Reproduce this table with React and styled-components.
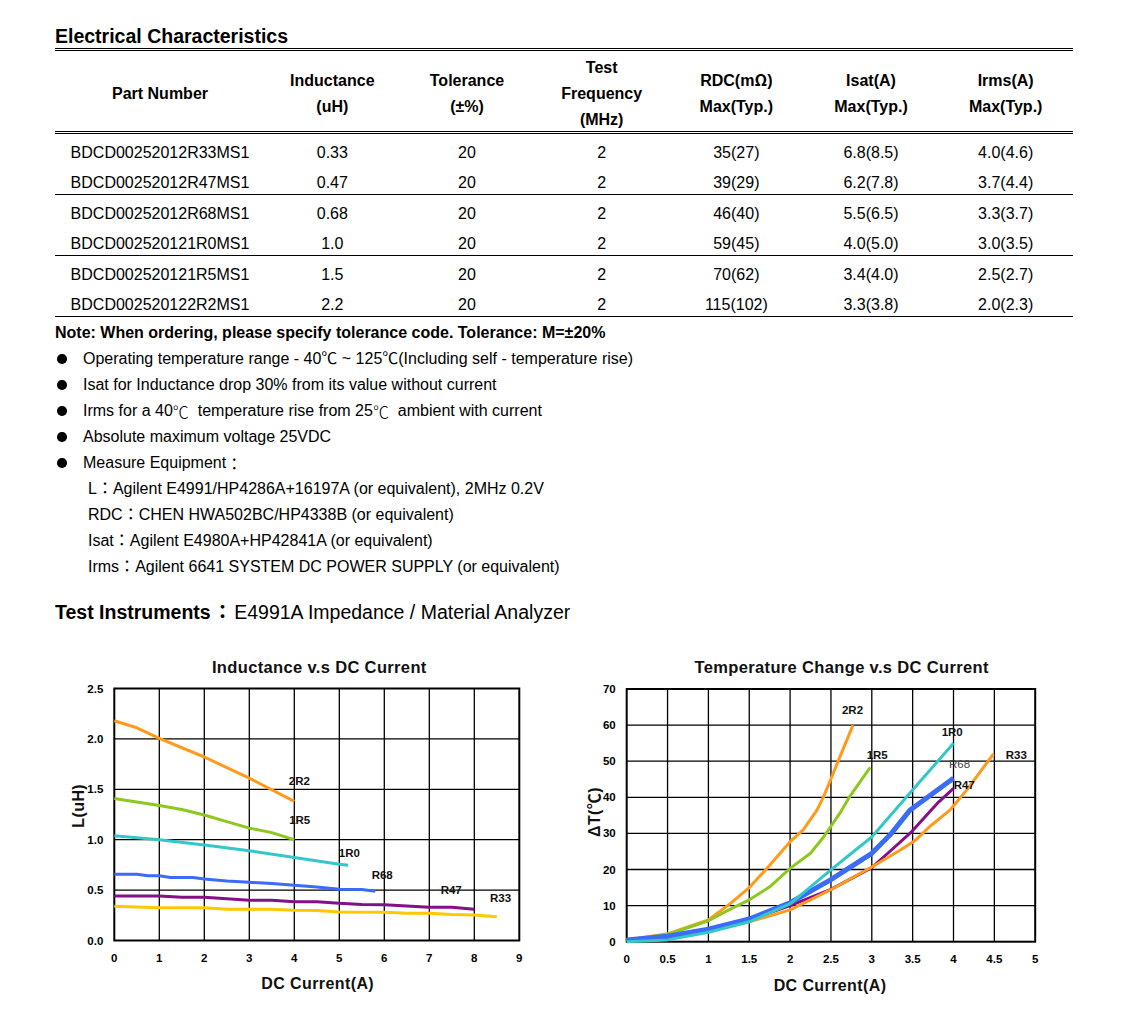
import React from 'react';
import styled, { createGlobalStyle } from 'styled-components';

const GlobalStyle = createGlobalStyle`
  html, body { margin: 0; padding: 0; background: #fff; }
  body {
    font-family: "Liberation Sans", Arial, "Noto Sans CJK TC", sans-serif;
    color: #000;
  }
`;

const Page = styled.div`
  width: 1018px;
  padding: 24px 0 0 55px;
`;

const Heading = styled.h2`
  margin: 0;
  font-size: 19.5px;
  font-weight: bold;
  line-height: 24px;
`;

const Table = styled.div`
  display: flex;
  flex-direction: column;
`;

const cols = `210px repeat(6, 1fr)`;

const HeaderRow = styled.div`
  display: grid;
  grid-template-columns: ${cols};
  height: 80px;
  border-top: 3px double #000;
  border-bottom: 3px double #000;
`;

const HeadCell = styled.div`
  display: flex;
  flex-direction: column;
  justify-content: center;
  align-items: center;
  padding-top: 4px;
  font-size: 16px;
  font-weight: bold;
  line-height: 26px;
  text-align: center;
`;

const Group = styled.div`
  border-bottom: 1px solid #000;
`;

const Row = styled.div`
  display: grid;
  grid-template-columns: ${cols};
  padding-top: 8px;
  font-size: 16px;
  line-height: 22px;
`;

const Cell = styled.div`
  text-align: center;
`;

const Cjk = styled.span`
  font-family: "Noto Sans CJK TC", sans-serif;
  font-weight: ${p => (p.$light ? 300 : 'inherit')};
  line-height: 0;
  margin-left: ${p => p.$pad || 0}px;
  margin-right: ${p => p.$pad || 0}px;
`;

const Notes = styled.div`
  margin-top: 3px;
  font-size: 16px;
  line-height: 26px;
`;

const NoteTitle = styled.div`
  font-weight: bold;
`;

const Bullet = styled.div`
  display: flex;
  align-items: center;
  height: 26px;
`;

const Marker = styled.span`
  flex: none;
  width: 28px;
  display: flex;
  align-items: center;
  &::after {
    content: '';
    width: 9.5px;
    height: 9.5px;
    margin-left: 2px;
    border-radius: 50%;
    background: #000;
  }
`;

const SubItem = styled.div`
  height: 26px;
  padding-left: 33px;
`;

const Section = styled.div`
  margin-top: 20px;
  height: 24px;
  font-size: 19.5px;
  line-height: 24px;
`;

const Strong = styled.span`
  font-weight: bold;
`;

const ChartRow = styled.div`
  display: flex;
  gap: 30px;
  margin-top: 26px;
  padding-left: 5px;
`;

const ChartSvg = styled.svg`
  display: block;
  flex: none;
  overflow: visible;
  font-family: "Liberation Sans", Arial, "Noto Sans CJK TC", sans-serif;
`;

const ChartTitle = styled.text`
  font-size: 16.5px;
  font-weight: bold;
  letter-spacing: 0.35px;
  fill: #111;
`;

const AxisTitle = styled.text`
  font-size: 16px;
  font-weight: bold;
  letter-spacing: 0.4px;
  fill: #111;
`;

const Tick = styled.text`
  font-size: 11.5px;
  font-weight: bold;
  fill: #000;
`;

const SeriesLabel = styled.text`
  font-size: 11.5px;
  font-weight: ${p => (p.$thin ? 'normal' : 'bold')};
  fill: ${p => (p.$thin ? '#444' : '#111')};
`;

const ORANGE = '#ff9a1a';
const GREEN = '#8cc81e';
const CYAN = '#33c7c9';
const BLUE = '#3a6cf5';
const PURPLE = '#840f88';
const YELLOW = '#ffc800';

const leftChart = {
  width: 480,
  height: 350,
  plot: { left: 54.3, right: 459.3, top: 38.5, bottom: 290.5 },
  xMax: 9,
  xStep: 1,
  yMax: 2.5,
  yStep: 0.5,
  xFmt: v => String(v),
  yFmt: v => v.toFixed(1),
  xTickY: 311.7,
  title: { text: 'Inductance v.s DC Current', x: 259.3, y: 23.3 },
  xTitle: { text: 'DC Current(A)', x: 257.7, y: 339 },
  yTitle: { text: 'L(uH)', x: 23.5, y: 155.8 },
  curves: [
    { color: ORANGE, w: 3, pts: [[0, 2.18], [0.5, 2.11], [1, 2.005], [2, 1.82], [3, 1.61], [4, 1.38]] },
    { color: GREEN, w: 3, pts: [[0, 1.41], [1, 1.34], [1.5, 1.3], [2, 1.245], [2.5, 1.18], [3, 1.115], [3.5, 1.07], [4, 1.0]] },
    { color: CYAN, w: 3, pts: [[0, 1.04], [1, 1.0], [2, 0.947], [3, 0.89], [4, 0.822], [5, 0.756], [5.2, 0.746]] },
    { color: BLUE, w: 3, pts: [[0, 0.657], [0.5, 0.657], [0.75, 0.642], [1, 0.642], [1.25, 0.625], [1.75, 0.625], [2, 0.61], [2.5, 0.59], [3, 0.577], [3.5, 0.566], [4, 0.548], [4.5, 0.532], [5, 0.508], [5.5, 0.505], [5.8, 0.488]] },
    { color: PURPLE, w: 3, pts: [[0, 0.44], [1, 0.44], [1.5, 0.43], [2, 0.43], [3, 0.40], [3.5, 0.40], [4, 0.385], [4.5, 0.385], [5, 0.37], [5.5, 0.358], [6, 0.355], [7, 0.33], [7.5, 0.33], [8, 0.31]] },
    { color: YELLOW, w: 3, pts: [[0, 0.34], [1, 0.325], [2, 0.325], [2.5, 0.31], [3, 0.31], [3.5, 0.31], [4, 0.30], [4.5, 0.298], [5, 0.283], [6, 0.28], [6.5, 0.27], [7, 0.27], [7.5, 0.258], [8, 0.252], [8.5, 0.236]] },
  ],
  labels: [
    { t: '2R2', x: 239.3, y: 135 },
    { t: '1R5', x: 239.7, y: 174 },
    { t: '1R0', x: 289.3, y: 206.7 },
    { t: 'R68', x: 322.2, y: 229 },
    { t: 'R47', x: 391.2, y: 244 },
    { t: 'R33', x: 440.5, y: 252.3 },
  ],
};

const rightChart = {
  width: 490,
  height: 350,
  plot: { left: 56.7, right: 465.2, top: 39, bottom: 291.7 },
  xMax: 5,
  xStep: 0.5,
  yMax: 70,
  yStep: 10,
  xFmt: v => String(v),
  yFmt: v => String(v),
  xTickY: 312.7,
  title: { text: 'Temperature Change v.s DC Current', x: 271.7, y: 22.7 },
  xTitle: { text: 'DC Current(A)', x: 260, y: 340.7 },
  yTitle: { text: 'ΔT(℃)', x: 30, y: 162 },
  curves: [
    { color: ORANGE, w: 3, pts: [[0, 0.5], [0.5, 2.2], [1, 6], [1.27, 10.6], [1.5, 15], [1.75, 21.2], [2, 27.7], [2.16, 31], [2.33, 36.5], [2.41, 40.2], [2.51, 45.7], [2.61, 51.2], [2.77, 60]] },
    { color: GREEN, w: 3, pts: [[0, 0.5], [0.5, 2], [1, 5.8], [1.25, 8.8], [1.5, 11.6], [1.75, 15.2], [2, 20.3], [2.25, 24.5], [2.41, 29], [2.61, 35.6], [2.73, 40.2], [2.98, 48.3]] },
    { color: PURPLE, w: 3, pts: [[0, 0.5], [0.5, 1.3], [1, 3], [1.5, 6], [2, 10], [2.5, 14.5], [3, 20.5], [3.24, 25.4], [3.49, 30.5], [3.8, 38.3], [4, 42.5]] },
    { color: ORANGE, w: 3, pts: [[0, 0.5], [0.5, 1.5], [1, 3], [1.5, 5.5], [2, 8.8], [2.5, 14.4], [3, 20.7], [3.35, 25.4], [3.53, 28], [3.71, 31.9], [3.96, 36.5], [4.16, 42], [4.49, 52]] },
    { color: BLUE, w: 5, pts: [[0, 0.5], [0.5, 1.5], [1, 3.5], [1.5, 6.3], [2, 10.8], [2.5, 17.2], [3, 24.5], [3.24, 30], [3.47, 36.5], [4, 45.3]] },
    { color: CYAN, w: 3, pts: [[0, 0], [0.5, 0.5], [1, 2.6], [1.5, 5.5], [2, 10.5], [2.5, 19.9], [2.8, 25.4], [3, 29], [3.18, 33.7], [3.5, 42], [4, 55]] },
  ],
  labels: [
    { t: '2R2', x: 282.5, y: 64.3 },
    { t: '1R0', x: 382.2, y: 86 },
    { t: '1R5', x: 307.2, y: 109.3 },
    { t: 'R33', x: 446.3, y: 109.3 },
    { t: 'R68', x: 389.5, y: 118.3, thin: true },
    { t: 'R47', x: 394.2, y: 139.3 },
  ],
};

function Chart({ spec }) {
  const { width, height, plot, xMax, xStep, yMax, yStep } = spec;
  const sx = v => plot.left + (v / xMax) * (plot.right - plot.left);
  const sy = v => plot.bottom - (v / yMax) * (plot.bottom - plot.top);
  const xs = [];
  for (let i = 0; i <= Math.round(xMax / xStep); i++) xs.push(+(i * xStep).toFixed(2));
  const ys = [];
  for (let i = 0; i <= Math.round(yMax / yStep); i++) ys.push(+(i * yStep).toFixed(2));

  return (
    <ChartSvg width={width} height={height} viewBox={`0 0 ${width} ${height}`}>
      <ChartTitle x={spec.title.x} y={spec.title.y} textAnchor="middle">{spec.title.text}</ChartTitle>
      {xs.slice(1, -1).map(v => (
        <line key={'gx' + v} x1={sx(v)} x2={sx(v)} y1={plot.top} y2={plot.bottom} stroke="#000" strokeWidth="1.3" />
      ))}
      {ys.slice(1, -1).map(v => (
        <line key={'gy' + v} x1={plot.left} x2={plot.right} y1={sy(v)} y2={sy(v)} stroke="#000" strokeWidth="1.3" />
      ))}
      <rect x={plot.left} y={plot.top} width={plot.right - plot.left} height={plot.bottom - plot.top} fill="none" stroke="#000" strokeWidth="2" />
      {spec.curves.map((c, i) => (
        <polyline
          key={'c' + i}
          points={c.pts.map(([a, b]) => `${sx(a).toFixed(1)},${sy(b).toFixed(1)}`).join(' ')}
          fill="none"
          stroke={c.color}
          strokeWidth={c.w}
          strokeLinejoin="round"
        />
      ))}
      {spec.labels.map(l => (
        <SeriesLabel key={l.t} x={l.x} y={l.y} textAnchor="middle" $thin={l.thin}>{l.t}</SeriesLabel>
      ))}
      {ys.map(v => (
        <Tick key={'ty' + v} x={plot.left - 11} y={sy(v) + 4} textAnchor="end">{spec.yFmt(v)}</Tick>
      ))}
      {xs.map(v => (
        <Tick key={'tx' + v} x={sx(v)} y={spec.xTickY} textAnchor="middle">{spec.xFmt(v)}</Tick>
      ))}
      <AxisTitle x={spec.xTitle.x} y={spec.xTitle.y} textAnchor="middle">{spec.xTitle.text}</AxisTitle>
      <AxisTitle textAnchor="middle" transform={`translate(${spec.yTitle.x} ${spec.yTitle.y}) rotate(-90)`}>{spec.yTitle.text}</AxisTitle>
    </ChartSvg>
  );
}

const rows = [
  ['BDCD00252012R33MS1', '0.33', '20', '2', '35(27)', '6.8(8.5)', '4.0(4.6)'],
  ['BDCD00252012R47MS1', '0.47', '20', '2', '39(29)', '6.2(7.8)', '3.7(4.4)'],
  ['BDCD00252012R68MS1', '0.68', '20', '2', '46(40)', '5.5(6.5)', '3.3(3.7)'],
  ['BDCD002520121R0MS1', '1.0', '20', '2', '59(45)', '4.0(5.0)', '3.0(3.5)'],
  ['BDCD002520121R5MS1', '1.5', '20', '2', '70(62)', '3.4(4.0)', '2.5(2.7)'],
  ['BDCD002520122R2MS1', '2.2', '20', '2', '115(102)', '3.3(3.8)', '2.0(2.3)'],
];

const groups = [rows.slice(0, 2), rows.slice(2, 4), rows.slice(4, 6)];

const headers = [
  ['Part Number'],
  ['Inductance', '(uH)'],
  ['Tolerance', '(±%)'],
  ['Test', 'Frequency', '(MHz)'],
  [<>RDC(m<Cjk>Ω</Cjk>)</>, 'Max(Typ.)'],
  ['Isat(A)', 'Max(Typ.)'],
  ['Irms(A)', 'Max(Typ.)'],
];

export default function App() {
  return (
    <>
      <GlobalStyle />
      <Page>
        <Heading>Electrical Characteristics</Heading>
        <Table>
          <HeaderRow>
            {headers.map((lines, i) => (
              <HeadCell key={i}>
                {lines.map((l, j) => <div key={j}>{l}</div>)}
              </HeadCell>
            ))}
          </HeaderRow>
          {groups.map((g, gi) => (
            <Group key={gi}>
              {g.map(r => (
                <Row key={r[0]}>
                  {r.map((c, ci) => <Cell key={ci}>{c}</Cell>)}
                </Row>
              ))}
            </Group>
          ))}
        </Table>
        <Notes>
          <NoteTitle>Note: When ordering, please specify tolerance code. Tolerance: M=±20%</NoteTitle>
          <Bullet><Marker />Operating temperature range - 40℃ ~ 125℃(Including self - temperature rise)</Bullet>
          <Bullet><Marker />Isat for Inductance drop 30% from its value without current</Bullet>
          <Bullet><Marker />Irms for a 40<Cjk $light>℃</Cjk>&nbsp; temperature rise from 25<Cjk $light>℃</Cjk>&nbsp; ambient with current</Bullet>
          <Bullet><Marker />Absolute maximum voltage 25VDC</Bullet>
          <Bullet><Marker />Measure Equipment<Cjk>：</Cjk></Bullet>
          <SubItem>L<Cjk>：</Cjk>Agilent E4991/HP4286A+16197A (or equivalent), 2MHz 0.2V</SubItem>
          <SubItem>RDC<Cjk>：</Cjk>CHEN HWA502BC/HP4338B (or equivalent)</SubItem>
          <SubItem>Isat<Cjk>：</Cjk>Agilent E4980A+HP42841A (or equivalent)</SubItem>
          <SubItem>Irms<Cjk>：</Cjk>Agilent 6641 SYSTEM DC POWER SUPPLY (or equivalent)</SubItem>
        </Notes>
        <Section>
          <Strong>Test Instruments<Cjk $pad={2}>：</Cjk></Strong>E4991A Impedance / Material Analyzer
        </Section>
        <ChartRow>
          <Chart spec={leftChart} />
          <Chart spec={rightChart} />
        </ChartRow>
      </Page>
    </>
  );
}
